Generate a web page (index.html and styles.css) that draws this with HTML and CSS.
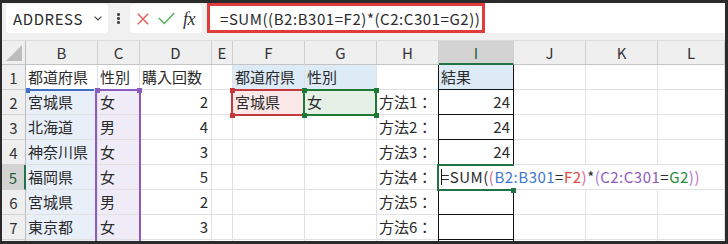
FILE: index.html
```html
<!DOCTYPE html>
<html lang="ja">
<head>
<meta charset="utf-8">
<title>Excel</title>
<link rel="stylesheet" href="styles.css">
</head>
<body>
<div class="app">
  <div class="toolbar">
    <div class="namebox">
      <span class="nb-text">ADDRESS</span>
      <svg class="chev" width="8" height="5" viewBox="0 0 8 5"><path d="M0.6 0.6 L4 4 L7.4 0.6" fill="none" stroke="#444" stroke-width="1.2"/></svg>
    </div>
    <div class="dots"><span></span><span></span><span></span></div>
    <div class="fxbox">
      <svg class="ic-x" width="12" height="12" viewBox="0 0 12 12"><path d="M0.8 0.8 L11.2 11.2 M11.2 0.8 L0.8 11.2" fill="none" stroke="#e25b5b" stroke-width="1.4"/></svg>
      <svg class="ic-ok" width="17" height="13" viewBox="0 0 17 13"><path d="M0.8 6 L6.3 11.6 L16.2 1" fill="none" stroke="#4fae5a" stroke-width="1.4"/></svg>
      <span class="fx">fx</span>
    </div>
    <div class="fbar"><div class="fbar-hl">=SUM((B2:B301=F2)*(C2:C301=G2))</div></div>
  </div>
  <div class="sheet">
    <div class="c corner"><svg width="16" height="16" viewBox="0 0 16 16"><path d="M16 0 L16 16 L0 16 Z" fill="#bdbdbd"/></svg></div>
    <div class="c h">B</div><div class="c h">C</div><div class="c h">D</div><div class="c h">E</div><div class="c h">F</div><div class="c h">G</div><div class="c h">H</div><div class="c h sel">I</div><div class="c h">J</div><div class="c h">K</div><div class="c h">L</div>

    <div class="c rh">1</div><div class="c">都道府県</div><div class="c">性別</div><div class="c">購入回数</div><div class="c"></div><div class="c lb">都道府県</div><div class="c lb">性別</div><div class="c"></div><div class="c lb tb">結果</div><div class="c"></div><div class="c"></div><div class="c"></div>

    <div class="c rh">2</div><div class="c rb rb-top">宮城県</div><div class="c rc rc-top">女</div><div class="c num">2</div><div class="c"></div><div class="c pk selF">宮城県</div><div class="c gr selG">女</div><div class="c">方法1：</div><div class="c num tb">24</div><div class="c"></div><div class="c"></div><div class="c"></div>

    <div class="c rh">3</div><div class="c rb">北海道</div><div class="c rc">男</div><div class="c num">4</div><div class="c"></div><div class="c"></div><div class="c"></div><div class="c">方法2：</div><div class="c num tb">24</div><div class="c"></div><div class="c"></div><div class="c"></div>

    <div class="c rh">4</div><div class="c rb">神奈川県</div><div class="c rc">女</div><div class="c num">3</div><div class="c"></div><div class="c"></div><div class="c"></div><div class="c">方法3：</div><div class="c num tb">24</div><div class="c"></div><div class="c"></div><div class="c"></div>

    <div class="c rh sel">5</div><div class="c rb">福岡県</div><div class="c rc">女</div><div class="c num">5</div><div class="c"></div><div class="c"></div><div class="c"></div><div class="c">方法4：</div>
    <div class="c tb active"><div class="editor"><span class="caret"></span>=SUM(<span class="p1">(</span><span class="rfb">B2:B301</span>=<span class="rfr">F2</span><span class="p1">)</span>*<span class="p2">(</span><span class="rfp">C2:C301</span>=<span class="rfg">G2</span><span class="p2">)</span><span class="p3">)</span></div></div>
    <div class="c"></div><div class="c"></div><div class="c"></div>

    <div class="c rh">6</div><div class="c rb">宮城県</div><div class="c rc">男</div><div class="c num">2</div><div class="c"></div><div class="c"></div><div class="c"></div><div class="c">方法5：</div><div class="c tb"></div><div class="c"></div><div class="c"></div><div class="c"></div>

    <div class="c rh">7</div><div class="c rb">東京都</div><div class="c rc">女</div><div class="c num">3</div><div class="c"></div><div class="c"></div><div class="c"></div><div class="c">方法6：</div><div class="c tb"></div><div class="c"></div><div class="c"></div><div class="c"></div>

    <div class="c rh"></div><div class="c rb"></div><div class="c rc"></div><div class="c"></div><div class="c"></div><div class="c"></div><div class="c"></div><div class="c"></div><div class="c tb"></div><div class="c"></div><div class="c"></div><div class="c"></div>
  </div>
</div>
</body>
</html>
```

FILE: styles.css
```css
* { box-sizing: border-box; }
html, body { margin: 0; padding: 0; }
body {
  width: 728px;
  height: 244px;
  overflow: hidden;
  background: #2b2b2b;
  padding: 3px 3px 3px 2px;
  font-family: "Noto Sans CJK JP", "Noto Sans", sans-serif;
  color: #2a2a2a;
}
.app {
  width: 723px;
  height: 238px;
  background: #fff;
  overflow: hidden;
  display: flex;
  flex-direction: column;
}

/* ---------- toolbar ---------- */
.toolbar {
  flex: none;
  height: 38px;
  background: #f0f0f0;
  border-bottom: 1px solid #dcdcdc;
  display: flex;
  align-items: flex-start;
  padding-left: 4px;
}
.namebox {
  margin-top: 1px;
  width: 102px;
  height: 29px;
  background: #fff;
  border-radius: 4px;
  display: flex;
  align-items: center;
  padding-left: 7px;
  font-size: 15px;
  line-height: 1;
  color: #2a2a2a;
}
.nb-text { letter-spacing: 0.6px; }
.chev { margin-left: auto; margin-right: 6px; }
.dots {
  margin-top: 1px;
  margin-left: 9px;
  height: 29px;
  width: 3px;
  display: flex;
  flex-direction: column;
  justify-content: center;
  gap: 1.6px;
}
.dots span {
  width: 2.6px;
  height: 2.6px;
  border-radius: 50%;
  background: #444;
}
.fxbox {
  margin-top: 1px;
  margin-left: 10px;
  width: 72px;
  height: 29px;
  background: #fff;
  border-radius: 4px;
  display: flex;
  align-items: center;
  padding-left: 7px;
}
.ic-ok { margin-left: 9px; }
.fx {
  margin-left: 8px;
  font-family: "Liberation Serif", "DejaVu Serif", serif;
  font-style: italic;
  font-size: 18px;
  line-height: 1;
  color: #333;
  letter-spacing: -0.5px;
}
.fbar {
  margin-left: 5px;
  flex: 1;
  height: 30px;
  background: #fff;
  display: flex;
}
.fbar-hl {
  width: 278px;
  height: 30px;
  border: 3px solid #e23b3b;
  padding-left: 10px;
  display: flex;
  align-items: center;
  white-space: nowrap;
  font-size: 15px;
  line-height: 1;
  letter-spacing: 0.55px;
  color: #2a2a2a;
}

/* ---------- sheet ---------- */
.sheet {
  flex: 1;
  overflow: hidden;
  display: grid;
  grid-template-columns: 24px 72px 42px 72px 21px 72px 72px 62px 75px 72px 72px 67px;
  grid-template-rows: 24px repeat(8, 25px);
}
.c {
  position: relative;
  border-right: 1px solid #e1e1e1;
  border-bottom: 1px solid #e1e1e1;
  display: flex;
  align-items: center;
  padding: 0 3px 1px 2px;
  font-size: 15px;
  line-height: 1;
  white-space: nowrap;
}
.num { justify-content: flex-end; }
.h, .rh, .corner {
  background: #efefef;
  justify-content: center;
  color: #333;
  padding: 0;
}
.h { border-right-color: #cfcfcf; border-bottom-color: #c4c4c4; }
.rh { border-right-color: #bdbdbd; border-bottom-color: #d2d2d2; }
.corner {
  border-right-color: #bdbdbd;
  border-bottom-color: #c4c4c4;
  justify-content: flex-end;
  align-items: flex-end;
  padding: 0 3px 3px 0;
}
.h.sel {
  background: #d3d3d3;
  border-bottom: 2px solid #217346;
  color: #1f5f3c;
}
.rh.sel {
  background: #d3d3d3;
  border-right: 2px solid #217346;
  color: #1f5f3c;
}

/* fills */
.lb { background: #ddebf7; }
.rb { background: #e8eff9; }
.rc { background: #f0ecf7; }
.pk { background: #fae8e8; }
.gr { background: #e5f0e6; }

/* black table border in column I */
.tb {
  border-right-color: #111;
  border-bottom-color: #111;
  box-shadow: -1px 0 0 #111;
}

/* reference range: B2:B301 (blue) */
.rb-top::before {
  content: "";
  position: absolute;
  left: 0;
  right: 3px;
  top: -1px;
  height: 2px;
  background: #3d6fc7;
  z-index: 2;
}
.rb-top::after {
  content: "";
  position: absolute;
  left: 0;
  top: -2px;
  width: 4px;
  height: 5px;
  background: #3d6fc7;
  z-index: 2;
}

/* reference range: C2:C301 (purple) */
.rc-top::before {
  content: "";
  position: absolute;
  left: -3px;
  right: -2px;
  top: -1px;
  height: 220px;
  border: 2px solid #8c5bbf;
  border-bottom: none;
  z-index: 3;
}
.rc-top::after {
  content: "";
  position: absolute;
  left: -3px;
  top: -2px;
  width: 5px;
  height: 5px;
  background: #8c5bbf;
  box-shadow: 42px 0 0 #8c5bbf;
  z-index: 3;
}

/* reference F2 (red) */
.selF::before {
  content: "";
  position: absolute;
  left: -2px;
  right: -1px;
  top: -1px;
  bottom: -2px;
  border: 2px solid #c4393b;
  z-index: 3;
}
.selF::after {
  content: "";
  position: absolute;
  left: -3px;
  top: -2px;
  width: 5px;
  height: 5px;
  background: #c4393b;
  box-shadow: 0 25px 0 #c4393b;
  z-index: 3;
}

/* reference G2 (green) */
.selG::before {
  content: "";
  position: absolute;
  left: -2px;
  right: -1px;
  top: -1px;
  bottom: -2px;
  border: 2px solid #1d7a34;
  z-index: 4;
}
.selG::after {
  content: "";
  position: absolute;
  left: -3px;
  top: -2px;
  width: 5px;
  height: 5px;
  background: #1d7a34;
  box-shadow: 72px 0 0 #1d7a34, 0 25px 0 #1d7a34, 72px 25px 0 #1d7a34;
  z-index: 4;
}

/* active cell I5 in edit mode */
.active { padding: 0; }
.editor {
  position: absolute;
  left: 0;
  top: 0;
  height: 24px;
  background: #fff;
  display: flex;
  align-items: center;
  padding: 0 2px 1px 2px;
  font-size: 15px;
  line-height: 1;
  letter-spacing: 0.5px;
  color: #2a2a2a;
  white-space: nowrap;
  z-index: 5;
}
.caret {
  display: inline-block;
  width: 1px;
  height: 16px;
  background: #111;
  margin-right: -1px;
}
.active::before {
  content: "";
  position: absolute;
  left: -2px;
  top: -1px;
  right: -1px;
  bottom: -2px;
  border: 2px solid #217346;
  border-right: none;
  z-index: 6;
}
.active::after {
  content: "";
  position: absolute;
  left: 72px;
  top: 23px;
  width: 5px;
  height: 5px;
  background: #217346;
  z-index: 7;
}
.p1 { color: #e0629a; }
.p2 { color: #a678d6; }
.p3 { color: #c86fb8; }
.rfb { color: #3f76d3; }
.rfr { color: #dc4a3c; }
.rfp { color: #8c5bbf; }
.rfg { color: #1f8a3a; }
```
